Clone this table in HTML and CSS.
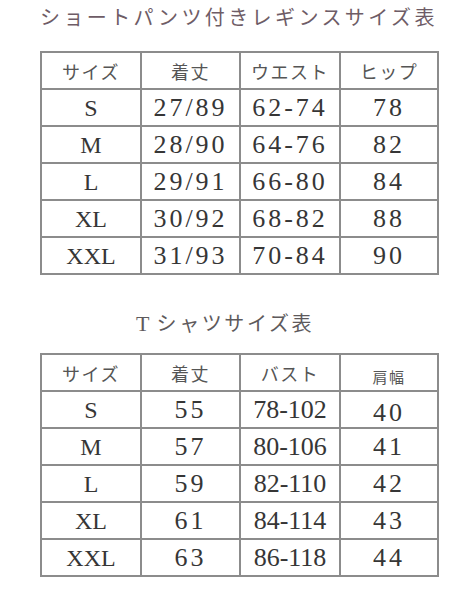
FILE: index.html
```html
<!DOCTYPE html>
<html lang="ja">
<head>
<meta charset="utf-8">
<link rel="stylesheet" href="styles.css">
</head>
<body>
<div class="page">
  <h1 class="title title-first">ショートパンツ付きレギンスサイズ表</h1>
  <table class="chart">
    <colgroup><col class="c1"><col class="c2"><col class="c3"><col class="c4"></colgroup>
    <tr class="head"><th>サイズ</th><th>着丈</th><th>ウエスト</th><th>ヒップ</th></tr>
    <tr><td class="size">S</td><td class="num">27/89</td><td class="num">62-74</td><td class="num">78</td></tr>
    <tr><td class="size">M</td><td class="num">28/90</td><td class="num">64-76</td><td class="num">82</td></tr>
    <tr><td class="size">L</td><td class="num">29/91</td><td class="num">66-80</td><td class="num">84</td></tr>
    <tr><td class="size">XL</td><td class="num">30/92</td><td class="num">68-82</td><td class="num">88</td></tr>
    <tr><td class="size">XXL</td><td class="num">31/93</td><td class="num">70-84</td><td class="num">90</td></tr>
  </table>
  <h2 class="title title-second"><span class="latin">T</span> シャツサイズ表</h2>
  <table class="chart">
    <colgroup><col class="c1"><col class="c2"><col class="c3"><col class="c4"></colgroup>
    <tr class="head"><th>サイズ</th><th>着丈</th><th>バスト</th><th class="small">肩幅</th></tr>
    <tr><td class="size">S</td><td class="num">55</td><td class="num tight">78-102</td><td class="num low">40</td></tr>
    <tr><td class="size">M</td><td class="num">57</td><td class="num tight">80-106</td><td class="num">41</td></tr>
    <tr><td class="size">L</td><td class="num">59</td><td class="num tight">82-110</td><td class="num">42</td></tr>
    <tr><td class="size">XL</td><td class="num">61</td><td class="num tight">84-114</td><td class="num">43</td></tr>
    <tr><td class="size">XXL</td><td class="num">63</td><td class="num tight">86-118</td><td class="num">44</td></tr>
  </table>
</div>
</body>
</html>
```

FILE: styles.css
```css
html, body {
  margin: 0;
  padding: 0;
  background: #ffffff;
}

.page {
  width: 470px;
  height: 600px;
  display: flex;
  flex-direction: column;
  align-items: flex-start;
  font-family: "Liberation Serif", "Noto Sans CJK JP", serif;
  color: #333333;
}

.title {
  margin: 0;
  font-family: "Noto Sans CJK JP", sans-serif;
  font-weight: 400;
  font-size: 20px;
  line-height: 28px;
  color: #6e5c66;
  letter-spacing: 3.4px;
  white-space: nowrap;
}

.title-first {
  margin-top: 3px;
  margin-left: 40px;
  margin-bottom: 20px;
}

.title-second {
  margin-top: 34px;
  margin-left: 136px;
  margin-bottom: 15px;
  letter-spacing: 2.6px;
  color: #5e5a5c;
}

.title .latin {
  font-family: "Liberation Serif", serif;
  font-size: 22px;
  letter-spacing: 0;
}

.chart {
  margin-left: 40px;
  width: 397px;
  border-collapse: collapse;
  table-layout: fixed;
  border: 2px solid #8c8c8c;
}

.c1 { width: 100px; }
.c2 { width: 99px; }
.c3 { width: 100px; }
.c4 { width: 98px; }

.chart tr {
  height: 37px;
}

.chart th,
.chart td {
  border: 2px solid #8c8c8c;
  padding: 0;
  text-align: center;
  vertical-align: middle;
  white-space: nowrap;
}

.chart th {
  font-family: "Noto Sans CJK JP", sans-serif;
  font-weight: 400;
  font-size: 18px;
  color: #555555;
  letter-spacing: 1.5px;
  line-height: 20px;
}

.chart th.small {
  font-size: 15px;
  padding-top: 8px;
}

.size {
  font-size: 24px;
  line-height: 26px;
  color: #363636;
}

.num {
  font-size: 26px;
  line-height: 28px;
  letter-spacing: 3px;
  color: #363636;
}

.num.tight {
  letter-spacing: 0;
}

.num.low {
  padding-top: 6px;
}
```
